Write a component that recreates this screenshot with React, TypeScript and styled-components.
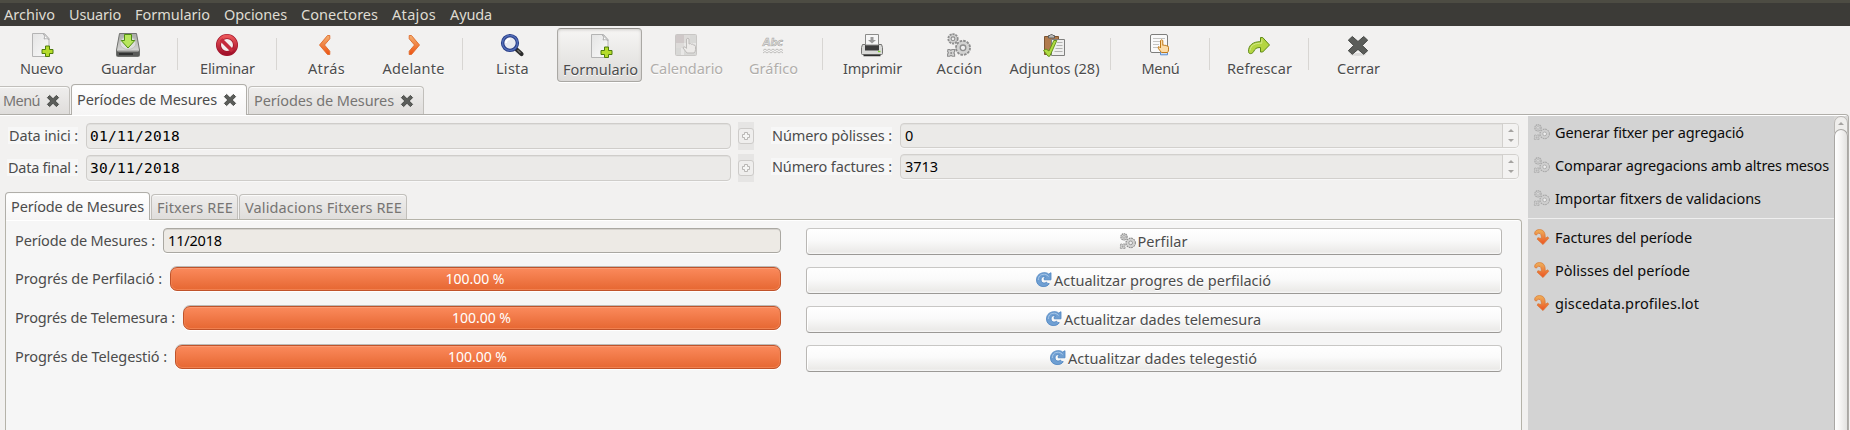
import React, { useLayoutEffect, useRef, useState } from "react";
import styled, { createGlobalStyle, css } from "styled-components";

const GlobalStyle = createGlobalStyle`
  * { box-sizing: border-box; }
  html, body { margin: 0; height: 100%; overflow: hidden; }
  body {
    background: #f2f1f0;
    color: #4c4c4c;
    font-family: "Noto Sans", "Open Sans", sans-serif;
    font-size: 14.5px;
    line-height: 20px;
    white-space: nowrap;
  }
  svg { display: block; flex: none; overflow: visible; }
`;

/* ---------- text that is tracked to a given advance width ---------- */

const TextBox = styled.span<{ $w: number }>`
  display: block;
  flex: none;
  width: ${(p) => p.$w}px;
  height: 20px;
  line-height: 18px;
`;

function Text({ w, children }: { w: number; children: string }) {
  const ref = useRef<HTMLSpanElement>(null);
  const [spacing, setSpacing] = useState(0);
  useLayoutEffect(() => {
    if (ref.current) {
      const natural = ref.current.getBoundingClientRect().width;
      setSpacing((w + 1 - natural) / children.length);
    }
  }, []);
  return (
    <TextBox $w={w}>
      <span ref={ref} style={{ letterSpacing: spacing }}>
        {children}
      </span>
    </TextBox>
  );
}

/* ---------- icons ---------- */

const Plus = () => (
  <path d="M14.5 13.5h4v3.5h3.5v4h-3.5v3h-4v-3H11v-4h3.5z" fill="#b5dc2b" stroke="#4f7d0c" />
);

const NewIcon = () => (
  <svg width="24" height="24" viewBox="0 0 24 24">
    <defs>
      <linearGradient id="paper" x1="0" y1="0" x2="1" y2="1">
        <stop offset="0" stopColor="#e4e4e4" />
        <stop offset="1" stopColor="#fafafa" />
      </linearGradient>
    </defs>
    <path d="M3.500 .5H15.500l4.500 5V23.500H3.500z" fill="url(#paper)" stroke="#b4b4b4" />
    <path d="M14.500 1c1.500 1.500 1 4 .5 5 1.500-.5 3.500-.5 5 .5z" fill="#fff" stroke="#a0a0a0" strokeWidth=".8" />
    <g transform="translate(2 -.5)"><Plus /></g>
  </svg>
);

const SaveIcon = () => (
  <svg width="24" height="24" viewBox="0 0 24 24">
    <defs>
      <linearGradient id="disk" x1="0" y1="0" x2="0" y2="1">
        <stop offset="0" stopColor="#a9aaa6" />
        <stop offset="1" stopColor="#e4e4e2" />
      </linearGradient>
    </defs>
    <path d="M3.500 .5h17l3 16.500v5.500q0 1-1 1h-21q-1 0-1-1V17z" fill="url(#disk)" stroke="#71726f" />
    <ellipse cx="12" cy="10" rx="8" ry="6.500" fill="#dededc" stroke="#c0c1be" />
    <path d="M.8 17.800h22.400v5.200H.8z" fill="#5a5b59" />
    <path d="M1.500 18.200h21" stroke="#a5a6a2" />
    <path d="M3 21h14" stroke="#252525" strokeWidth="1.500" />
    <path d="M8.500 1.500h7v6h3.300L12 15 5.200 7.500h3.300z" fill="#b8e65c" stroke="#4f8f10" />
  </svg>
);

const DeleteIcon = () => (
  <svg width="24" height="24" viewBox="0 0 24 24">
    <defs>
      <linearGradient id="ban" x1="0" y1="0" x2="0" y2="1">
        <stop offset="0" stopColor="#ea5558" />
        <stop offset="1" stopColor="#a3112b" />
      </linearGradient>
    </defs>
    <circle cx="12" cy="12" r="8.500" fill="#f3eeee" stroke="#a11228" strokeWidth="5" />
    <circle cx="12" cy="12" r="8.600" fill="none" stroke="url(#ban)" strokeWidth="3.600" />
    <path d="M6 6.500 17.500 18" stroke="#c42a3c" strokeWidth="3.800" />
  </svg>
);

const ArrowGradient = () => (
  <defs>
    <linearGradient id="chev" x1="0" y1="0" x2="0" y2="1">
      <stop offset="0" stopColor="#f4b070" />
      <stop offset="1" stopColor="#ee5312" />
    </linearGradient>
  </defs>
);

const BackIcon = () => (
  <svg width="24" height="24" viewBox="0 0 24 24">
    <ArrowGradient />
    <path d="M13.500 2.500h2.300v3.300L10.500 12l5.300 6.200v3.300h-2.300L5.500 12z" fill="url(#chev)" stroke="#df6a2a" strokeWidth=".9" strokeLinejoin="round" />
  </svg>
);

const ForwardIcon = () => (
  <svg width="24" height="24" viewBox="0 0 24 24">
    <ArrowGradient />
    <path d="M10.500 2.500H8.200v3.300l5.300 6.200-5.300 6.200v3.300h2.300L18.500 12z" fill="url(#chev)" stroke="#df6a2a" strokeWidth=".9" strokeLinejoin="round" />
  </svg>
);

const SearchIcon = () => (
  <svg width="24" height="24" viewBox="0 0 24 24">
    <path d="m15.500 15.500 6 5.500" stroke="#2b2b2b" strokeWidth="4.200" strokeLinecap="round" />
    <path d="m17.500 17 3 3" stroke="#77776f" strokeWidth="1.200" />
    <circle cx="10" cy="10" r="7.400" fill="#e9eaf0" stroke="#253a86" strokeWidth="3.400" />
    <circle cx="10" cy="10" r="7.500" fill="none" stroke="#526db6" strokeWidth="1.500" />
    <path d="M6 10a4 4 0 0 1 4-4" stroke="#fff" strokeWidth="2" fill="none" />
  </svg>
);

const CalendarIcon = () => (
  <svg width="24" height="24" viewBox="0 0 24 24">
    <rect x="1.500" y="1.500" width="21" height="21" rx="1" fill="#e8e7e6" stroke="#c9c7c5" />
    <path d="M2 2h8v8H2z" fill="#cfc8c8" />
    <path d="M10 2h6v8h-6zM2 10h8v5H2z" fill="#dddbd9" />
    <path d="M16 2h6v8h-6zM10 15h12v7H10zM2 15h5v7H2z" fill="#d8d8d6" />
    <path d="M12.500 6q1.500-1.500 2.500 0v5q1.500-1 2.500.3 1.500-.5 2.200.7 1.800 0 1.800 1.500v3q0 2-1.500 3.500h-7L9 15q.5-2 2.300-.8l1.200 1.200z" fill="#eceae8" stroke="#bdbbb9" />
  </svg>
);

const AbcText = styled.text`
  font: bold italic 11px "DejaVu Sans", sans-serif;
`;

const ChartIcon = () => (
  <svg width="24" height="24" viewBox="0 0 24 24">
    <AbcText x="2" y="13" textLength="20" lengthAdjust="spacingAndGlyphs" fill="#c6c5c3" stroke="#adacaa" strokeWidth=".7">Abc</AbcText>
    <path d="m2 17.500 2-1.500 2 1.500 2-1.500 2 1.500 2-1.500 2 1.500 2-1.500 2 1.500 2-1.500 2 1.500M2 20l2-1.500L6 20l2-1.500 2 1.500 2-1.500 2 1.500 2-1.500 2 1.500 2-1.500 2 1.500" stroke="#bfbebc" fill="none" />
  </svg>
);

const PrintIcon = () => (
  <svg width="24" height="24" viewBox="0 0 24 24">
    <path d="M2.500 11.500h19l1 3v6q0 1-1 1h-19q-1 0-1-1v-6z" fill="#d9d9d7" stroke="#747472" />
    <path d="M5 12h14v5.500H5z" fill="#3c3c3c" />
    <path d="M5.500 1.500h13v10.500h-13z" fill="#f6f6f6" stroke="#8c8c8a" />
    <path d="M10.500 4h3v3H16l-4 3.500L8 7h2.500z" fill="#9a9a9a" />
    <path d="M3.500 22.500h17" stroke="#2e2e2e" strokeWidth="1.500" />
    <path d="M18 18.500h2.500" stroke="#7fd030" strokeWidth="1.300" />
  </svg>
);

function GearsIcon({ size, faint }: { size: number; faint?: boolean }) {
  const dark = faint ? "#a9a9a9" : "#8e8e8e";
  const fill = faint ? "#cfcfcf" : "#d3d3d2";
  return (
    <svg width={size} height={size} viewBox="0 0 24 24">
      <circle cx="6" cy="5.800" r="4.700" fill={fill} stroke={dark} strokeWidth="1.800" strokeDasharray="2.200 .8" />
      <circle cx="6" cy="5.800" r="1.900" fill="#eee" stroke={dark} strokeWidth="1.100" />
      <circle cx="16" cy="14.800" r="7" fill={fill} stroke={dark} strokeWidth="1.900" strokeDasharray="2.600 1.060" />
      <circle cx="16" cy="14.800" r="5.800" fill={fill} />
      <circle cx="16" cy="14.800" r="2.800" fill="#eee" stroke={dark} strokeWidth="1.300" />
      <path d="M1 16.500h1.500l1.300.8 1.300-.8h2.500v2l-.8 1.400.8 1.300v2H5.500l-1.500-.8-1.300.8H.6v-2l.8-1.500-.8-1.300z" fill={fill} stroke={dark} strokeWidth="1.100" />
      <circle cx="4.200" cy="19.900" r="1" fill={dark} />
    </svg>
  );
}

const AttachIcon = () => (
  <svg width="24" height="24" viewBox="0 0 24 24">
    <path d="M2.500 3.500h14v18h-14z" fill="#b07a4c" stroke="#7c5431" />
    <path d="M6.500 5V2.500H8q1.500-3 3 0h1.500V5z" fill="#b9b9b7" stroke="#5e5e5c" />
    <path d="M9.500 6.500h13v16h-13z" fill="#efefee" stroke="#80807e" />
    <path d="M15 9.500h5.500m-6 3h6m-7 3h7m-8 3h8" stroke="#b3b3b1" />
    <path d="m1.500 17.500 2.500-1.500 3 2 4.800-10.500h3L7.800 23.200H6z" fill="#b0dc42" stroke="#5b8c14" strokeWidth=".9" />
  </svg>
);

const MenuIcon = () => (
  <svg width="24" height="24" viewBox="0 0 24 24">
    <rect x="2.500" y="1.500" width="17" height="18" rx="1.500" fill="#fafafa" stroke="#7e7e7c" />
    <path d="M5 5.500h12M5 8.500h7M5 11.500h6M5 14.500h5" stroke="#c4c4c2" />
    <path d="M12.500 18.500h7v3.300h-7z" fill="#cfe0f5" stroke="#5b8ed0" />
    <path d="M12.500 7.500q1.200-1.500 2.300 0v4.800q1.300-.8 2 .2 1.300-.6 2 .4 1.700-.2 1.700 1.400v2.600q0 1.500-1 2.600h-6l-3-3.800q-1-2 .5-2.200l1.500 1.500z" fill="#fcdca8" stroke="#c17a18" />
  </svg>
);

const RedoIcon = () => (
  <svg width="24" height="24" viewBox="0 0 24 24">
    <path d="M1.500 18.500C1.500 12 6 8.700 13.500 8.700V4.500h2.200L22.500 12l-6.800 7h-2.200v-4.500c-4 0-5.500 1-7 4.300-1.500 2.500-5 2.500-5-.3z" fill="#b4d542" stroke="#5f8a17" strokeLinejoin="round" />
    <path d="M3 17.500C4 11.800 8 10.200 14.800 10.200V6.500" stroke="#d3e98a" fill="none" />
  </svg>
);

function CrossIcon({ size }: { size: number }) {
  return (
    <svg width={size} height={size} viewBox="1.300 1.300 21.400 21.400">
      <path d="M6 2 12 8l6-6 4 4-6 6 6 6-4 4-6-6-6 6-4-4 6-6-6-6z" fill="#5b5d5a" stroke="#40423f" strokeWidth="1.600" strokeLinejoin="round" />
    </svg>
  );
}

const CloseIcon = () => (
  <svg width="24" height="24" viewBox="0 0 24 24">
    <ellipse cx="12" cy="21.500" rx="8" ry="1.500" fill="#dcdbda" />
    <path d="m6.300 3.500 5.700 5 5.700-5 4 3.700-5.400 5.300 5.400 5.200-4 3.600-5.700-4.900-5.700 4.900-4-3.600 5.400-5.200-5.400-5.300z" fill="#5b5d5a" stroke="#464845" strokeLinejoin="round" />
  </svg>
);

const ReloadIcon = () => (
  <svg width="16" height="16" viewBox="0 0 16 16">
    <path d="M9.500.7c1.300.1 2.300.6 3.200 1.400L15 .7v7.100H8.200V5.900l1.500-.6c-2.400-1.400-4.600-.2-4.600 2.500 0 2.900 3 4.200 5.300 2.300l1.300 1.300 1.600.3C10.800 16.200.5 15.800.5 8 .5 2.800 4.700.3 9.500.7z" fill="#6f9fd2" stroke="#4b83c0" strokeWidth=".8" />
    <path d="M2.300 8c0-4.500 3.500-6.500 7.700-5.500l2.700 2" stroke="#a8c7e8" fill="none" />
  </svg>
);

const JumpIcon = () => (
  <svg width="16" height="16" viewBox="0 0 16 16">
    <defs>
      <linearGradient id="jump" x1="0" y1="0" x2="0" y2="1">
        <stop offset="0" stopColor="#eeb25c" />
        <stop offset="1" stopColor="#ec5220" />
      </linearGradient>
    </defs>
    <path d="M.6 4.200C1 1.700 3 .6 5.300.6c4 0 5.900 2.500 5.900 7.200v1.400l2.600-1.400.9 1.500L9 15.600 3.200 10.200l.7-1.500 3.400.9C7.600 6 6.600 4.300 4.800 4.300c-1.200 0-1.500.6-2 1.500C2 6.500.5 5.700.6 4.200z" fill="url(#jump)" stroke="#d87430" strokeWidth=".7" />
  </svg>
);

/* ---------- menu bar ---------- */

const MenuBar = styled.nav`
  display: flex;
  flex: none;
  gap: 15px;
  height: 26px;
  padding: 2px 0 0 4px;
  background: #3c3b37;
  border-top: 3px solid #4d4c43;
  color: #dfdbd2;
`;

/* ---------- toolbar ---------- */

const ToolBar = styled.div`
  display: flex;
  flex: none;
  height: 58px;
  margin-left: -2px;
  padding-top: 2px;
`;

const Tool = styled.div<{ $wide?: boolean; $active?: boolean; $disabled?: boolean }>`
  display: flex;
  flex: none;
  flex-direction: column;
  align-items: center;
  gap: 2px;
  width: ${(p) => (p.$wide ? 102 : 87)}px;
  height: 54px;
  padding: 5px ${(p) => (p.$wide ? 0 : 1)}px 0 0;
  text-shadow: 0 1px #fff;
  color: ${(p) => (p.$disabled ? "#b1aeab" : "#4c4c4c")};
  ${(p) =>
    p.$active &&
    css`
      width: 85px;
      margin: 0 1px;
      padding: 5px 0 0 1px;
      border: 1px solid #aaa8a4;
      border-top-color: #918f8b;
      border-radius: 4px;
      background: linear-gradient(#f6f5f4, #dddbd9);
      box-shadow: inset 0 1px 3px #cfcdca, 0 1px #fff;
    `}
`;

const ToolSeparator = styled.i`
  flex: none;
  width: 1px;
  height: 32px;
  margin: 10px 6px 0 5px;
  background: #d8d6d3;
`;

/* ---------- notebooks ---------- */

const TabStrip = styled.div<{ $inset?: boolean }>`
  display: flex;
  flex: none;
  align-items: flex-end;
  gap: 1px;
  position: relative;
  z-index: 1;
  height: ${(p) => (p.$inset ? 28 : 31)}px;
  padding-left: ${(p) => (p.$inset ? 5 : 0)}px;
  margin-bottom: -1px;
`;

const Tab = styled.div<{ $w: number; $h: number; $active?: boolean; $pad: number; $top?: number; $first?: boolean }>`
  display: flex;
  flex: none;
  align-items: center;
  gap: 8px;
  width: ${(p) => p.$w}px;
  height: ${(p) => p.$h}px;
  padding: ${(p) => p.$top ?? 0}px 0 0 ${(p) => p.$pad}px;
  margin-bottom: ${(p) => (p.$active ? 0 : 1)}px;
  border: 1px solid ${(p) => (p.$active ? "#b0aea9" : "#c1bfbb")};
  border-bottom: 0;
  border-left-width: ${(p) => (p.$first ? 0 : 1)}px;
  border-radius: ${(p) => (p.$first ? "0 4px 0 0" : "4px 4px 0 0")};
  color: ${(p) => (p.$active ? "#4c4c4c" : "#777573")};
  background: ${(p) => (p.$active ? "linear-gradient(#fff, #f6f5f5)" : "linear-gradient(#efeeed, #dfdddb)")};
  box-shadow: inset 0 1px #fbfbfa;
`;

const Page = styled.div`
  display: flex;
  flex: 1;
  min-height: 0;
  width: 1849px;
  border: 1px solid #b0aea9;
  border-width: 1px 1px 0 0;
  border-top-right-radius: 4px;
  box-shadow: inset 0 1px #fff;
  padding-top: 1px;
`;

const Main = styled.main`
  display: flex;
  flex-direction: column;
  flex: none;
  width: 1528px;
  padding-top: 6px;
`;

/* ---------- record header ---------- */

const HeaderForm = styled.section`
  display: flex;
  flex: none;
  height: 70px;
`;

const DateColumn = styled.div`
  display: flex;
  flex-direction: column;
  gap: 4px;
  width: 771px;
`;

const CountColumn = styled.div`
  display: flex;
  flex-direction: column;
  gap: 6px;
  padding-top: 1px;
`;

const FieldRow = styled.div<{ $h: number }>`
  display: flex;
  align-items: center;
  height: ${(p) => p.$h}px;
`;

const CaptionCell = styled.div<{ $w: number; $raise?: boolean }>`
  display: flex;
  justify-content: flex-end;
  flex: none;
  width: ${(p) => p.$w}px;
  padding: 0 8px ${(p) => (p.$raise ? 1 : 0)}px 0;
`;

const Caption = styled.div`
  display: flex;
  align-items: center;
  height: 17px;
  padding: 1px 1px 0;
  background: #f7f7f7;
`;

const DateEntry = styled.div`
  display: flex;
  align-items: center;
  width: 645px;
  height: 26px;
  margin-right: 7px;
  padding-left: 3px;
  border: 1px solid #cfcdca;
  border-radius: 4px;
  background: #ebeae8;
  box-shadow: inset 0 1px #e0dfdd, 0 1px #f8f8f8;
  color: #000;
  font-family: "DejaVu Sans Mono", monospace;
  font-size: 14.5px;
  letter-spacing: 0.27px;
`;

const PickerCell = styled.div`
  display: flex;
  align-items: center;
  width: 16px;
  height: 28px;
  background: #e6e5e4;
`;

const PickerButton = styled.div`
  display: flex;
  align-items: center;
  justify-content: center;
  width: 16px;
  height: 16px;
  border: 1px solid #cdcbc9;
  border-radius: 3px;
  background: #efeeed;
`;

const PlusOutline = () => (
  <svg width="8" height="8" viewBox="0 0 8 8">
    <path d="M2.500.5h3v2h2v3h-2v2h-3v-2h-2v-3h2z" fill="#f6f6f5" stroke="#b9b7b5" />
  </svg>
);

const SpinEntry = styled.div`
  display: flex;
  align-items: center;
  justify-content: space-between;
  width: 619px;
  height: 25px;
  padding: 1px 0 0 4px;
  border: 1px solid #d2d0cd;
  border-radius: 4px;
  background: #ebeae8;
  box-shadow: inset 0 1px #e2e1df, 0 1px #f8f8f8;
  color: #000;
`;

const Spinner = styled.div`
  display: flex;
  flex-direction: column;
  align-items: center;
  justify-content: center;
  gap: 7px;
  width: 16px;
  height: 23px;
  margin-top: -1px;
  border-left: 1px solid #d2d0cd;
  border-radius: 0 3px 3px 0;
  background: #f3f2f1;
`;

const Triangle = styled.i<{ $down?: boolean }>`
  border: 3px solid transparent;
  border-width: ${(p) => (p.$down ? "3px 3px 0" : "0 3px 3px")};
  border-top-color: ${(p) => (p.$down ? "#a5a3a1" : "transparent")};
  border-bottom-color: ${(p) => (p.$down ? "transparent" : "#a5a3a1")};
`;

/* ---------- period panel ---------- */

const Panel = styled.section`
  display: flex;
  gap: 25px;
  flex: 1;
  width: 1517px;
  margin-left: 5px;
  padding: 8px 0 0 9px;
  border: 1px solid #b5b3a9;
  border-bottom: 0;
  border-radius: 0 4px 0 0;
  background: #f6f6f6;
  box-shadow: inset 0 1px #fff;
`;

const ProgressColumn = styled.div`
  display: flex;
  flex-direction: column;
  width: 766px;
`;

const ProgressRow = styled.div`
  display: flex;
  align-items: flex-start;
  gap: 9px;
  height: 39px;
`;

const RowCaption = styled.div<{ $top: number }>`
  padding-top: ${(p) => p.$top}px;
`;

const PeriodEntry = styled.div`
  display: flex;
  align-items: center;
  flex: 1;
  height: 25px;
  padding: 1px 0 0 4px;
  border: 1px solid #aaa8a2;
  border-radius: 4px;
  background: #edeae5;
  box-shadow: inset 0 1px #d5d2cd, 0 1px #fff;
  color: #000;
`;

const ProgressBar = styled.div`
  display: flex;
  align-items: center;
  justify-content: center;
  flex: 1;
  height: 24px;
  padding: 1px 2px 0 0;
  border: 1px solid #c0532a;
  border-radius: 7px;
  background: linear-gradient(#fb8a5c, #e66732);
  box-shadow: 0 -1px #bdbbb7, inset 0 1px #fb9a72, inset 0 0 0 1px #f0804f, 0 1px #fff;
  color: #fff;
  font-size: 14px;
`;

const ButtonColumn = styled.div`
  display: flex;
  flex-direction: column;
  gap: 12px;
`;

const ActionButton = styled.div`
  display: flex;
  align-items: center;
  justify-content: center;
  gap: 2px;
  width: 696px;
  height: 27px;
  padding-right: 2px;
  border: 1px solid #b9b7b4;
  border-top-color: #c8c7c5;
  border-bottom-color: #9b9996;
  border-radius: 4px;
  background: linear-gradient(#fff, #fafafa 45%, #ebeae8 92%, #f8f8f8);
  box-shadow: inset 1px 0 #fff, inset -1px 0 #fff;
  text-shadow: 0 1px #fff;
`;

const ButtonIcon = styled.span`
  margin-bottom: 1px;
`;

const ButtonLabel = styled.span`
  padding-top: 1px;
`;

/* ---------- actions sidebar ---------- */

const Sidebar = styled.aside`
  flex: none;
  width: 306px;
  background: #d3d3d3;
  color: #0c0c0c;
`;

const WizardGroup = styled.div`
  padding: 1px 0 2px;
  margin-bottom: 3px;
  border-bottom: 1px solid #efefef;
`;

const LinkGroup = styled.div``;

const SideItem = styled.div`
  display: flex;
  align-items: center;
  gap: 5px;
  height: 33px;
  padding: 0 0 3px 6px;
`;

const SideLabel = styled.span`
  padding-top: 2px;
`;

const ScrollBar = styled.div`
  display: flex;
  flex-direction: column;
  flex: none;
  width: 14px;
  background: #d8d7d5;
`;

const ScrollUp = styled.div`
  display: flex;
  align-items: center;
  justify-content: center;
  height: 17px;
  padding-bottom: 3px;
  border: 1px solid #bab8b5;
  border-radius: 7px 7px 0 0;
  background: #efeeec;
`;

const ScrollThumb = styled.div`
  flex: 1;
  margin-top: -4px;
  border: 1px solid #a9a7a4;
  border-bottom: 0;
  border-radius: 7px 7px 0 0;
  background: linear-gradient(90deg, #fff, #f4f3f2 50%, #e3e2e0);
`;

/* ---------- data ---------- */

const menus: [string, number][] = [
  ["Archivo", 50], ["Usuario", 51], ["Formulario", 74], ["Opciones", 62],
  ["Conectores", 76], ["Atajos", 43], ["Ayuda", 41],
];

type ToolSpec = { label: string; w: number; icon: React.ReactNode; active?: boolean; disabled?: boolean; wide?: boolean };

const tools: (ToolSpec | null)[] = [
  { label: "Nuevo", w: 42, icon: <NewIcon /> },
  { label: "Guardar", w: 54, icon: <SaveIcon /> },
  null,
  { label: "Eliminar", w: 54, icon: <DeleteIcon /> },
  null,
  { label: "Atrás", w: 36, icon: <BackIcon /> },
  { label: "Adelante", w: 61, icon: <ForwardIcon /> },
  null,
  { label: "Lista", w: 32, icon: <SearchIcon /> },
  { label: "Formulario", w: 74, icon: <NewIcon />, active: true },
  { label: "Calendario", w: 72, icon: <CalendarIcon />, disabled: true },
  { label: "Gráfico", w: 48, icon: <ChartIcon />, disabled: true },
  null,
  { label: "Imprimir", w: 58, icon: <PrintIcon /> },
  { label: "Acción", w: 45, icon: <GearsIcon size={24} /> },
  { label: "Adjuntos (28)", w: 89, icon: <AttachIcon />, wide: true },
  null,
  { label: "Menú", w: 37, icon: <MenuIcon /> },
  null,
  { label: "Refrescar", w: 64, icon: <RedoIcon /> },
  null,
  { label: "Cerrar", w: 42, icon: <CloseIcon /> },
];

const progress: [string, number][] = [
  ["Progrés de Perfilació :", 146],
  ["Progrés de Telemesura :", 159],
  ["Progrés de Telegestió :", 151],
];

const buttons: [string, number][] = [
  ["Perfilar", 49],
  ["Actualitzar progres de perfilació", 216],
  ["Actualitzar dades telemesura", 196],
  ["Actualitzar dades telegestió", 188],
];

const wizards: [string, number][] = [
  ["Generar fitxer per agregació", 188],
  ["Comparar agregacions amb altres mesos", 273],
  ["Importar fitxers de validacions", 205],
];

const links: [string, number][] = [
  ["Factures del període", 136],
  ["Pòlisses del període", 134],
  ["giscedata.profiles.lot", 143],
];

function DateField({ label, w, value }: { label: string; w: number; value: string }) {
  return (
    <FieldRow $h={28}>
      <CaptionCell $w={86} $raise>
        <Caption><Text w={w}>{label}</Text></Caption>
      </CaptionCell>
      <DateEntry>{value}</DateEntry>
      <PickerCell>
        <PickerButton><PlusOutline /></PickerButton>
      </PickerCell>
    </FieldRow>
  );
}

function CountField({ label, w, value, valueWidth }: { label: string; w: number; value: string; valueWidth: number }) {
  return (
    <FieldRow $h={25}>
      <CaptionCell $w={129}>
        <Caption><Text w={w}>{label}</Text></Caption>
      </CaptionCell>
      <SpinEntry>
        <Text w={valueWidth}>{value}</Text>
        <Spinner><Triangle /><Triangle $down /></Spinner>
      </SpinEntry>
    </FieldRow>
  );
}

const Window = styled.div`
  display: flex;
  flex-direction: column;
  width: 1850px;
  height: 430px;
  overflow: hidden;
`;

export default function App() {
  return (
    <Window>
      <GlobalStyle />
      <MenuBar>
        {menus.map(([label, w]) => <Text key={label} w={w}>{label}</Text>)}
      </MenuBar>

      <ToolBar>
        {tools.map((tool, i) =>
          tool ? (
            <Tool key={i} $wide={tool.wide} $active={tool.active} $disabled={tool.disabled}>
              {tool.icon}
              <Text w={tool.w}>{tool.label}</Text>
            </Tool>
          ) : (
            <ToolSeparator key={i} />
          )
        )}
      </ToolBar>

      <TabStrip>
        <Tab $w={70} $h={28} $pad={3} $top={1} $first><Text w={36}>Menú</Text><CrossIcon size={12} /></Tab>
        <Tab $w={176} $h={31} $pad={5} $active><Text w={139}>Períodes de Mesures</Text><CrossIcon size={12} /></Tab>
        <Tab $w={176} $h={28} $pad={5} $top={1}><Text w={139}>Períodes de Mesures</Text><CrossIcon size={12} /></Tab>
      </TabStrip>

      <Page>
        <Main>
          <HeaderForm>
            <DateColumn>
              <DateField label="Data inici :" w={68} value="01/11/2018" />
              <DateField label="Data final :" w={69} value="30/11/2018" />
            </DateColumn>
            <CountColumn>
              <CountField label="Número pòlisses :" w={119} value="0" valueWidth={8} />
              <CountField label="Número factures :" w={119} value="3713" valueWidth={32} />
            </CountColumn>
          </HeaderForm>

          <TabStrip $inset>
            <Tab $w={145} $h={28} $pad={5} $top={1} $active><Text w={132}>Període de Mesures</Text></Tab>
            <Tab $w={87} $h={25} $pad={5} $top={2}><Text w={75}>Fitxers REE</Text></Tab>
            <Tab $w={168} $h={25} $pad={5} $top={2}><Text w={156}>Validacions Fitxers REE</Text></Tab>
          </TabStrip>
          <Panel>
            <ProgressColumn>
              <ProgressRow>
                <RowCaption $top={3}><Text w={139}>Període de Mesures :</Text></RowCaption>
                <PeriodEntry><Text w={53}>11/2018</Text></PeriodEntry>
              </ProgressRow>
              {progress.map(([label, w]) => (
                <ProgressRow key={label}>
                  <RowCaption $top={2}><Text w={w}>{label}</Text></RowCaption>
                  <ProgressBar><Text w={58}>100.00 %</Text></ProgressBar>
                </ProgressRow>
              ))}
            </ProgressColumn>
            <ButtonColumn>
              {buttons.map(([label, w], i) => (
                <ActionButton key={label}>
                  <ButtonIcon>{i === 0 ? <GearsIcon size={16} /> : <ReloadIcon />}</ButtonIcon>
                  <ButtonLabel><Text w={w}>{label}</Text></ButtonLabel>
                </ActionButton>
              ))}
            </ButtonColumn>
          </Panel>
        </Main>

        <Sidebar>
          <WizardGroup>
            {wizards.map(([label, w]) => (
              <SideItem key={label}>
                <GearsIcon size={16} faint />
                <SideLabel><Text w={w}>{label}</Text></SideLabel>
              </SideItem>
            ))}
          </WizardGroup>
          <LinkGroup>
            {links.map(([label, w]) => (
              <SideItem key={label}>
                <JumpIcon />
                <SideLabel><Text w={w}>{label}</Text></SideLabel>
              </SideItem>
            ))}
          </LinkGroup>
        </Sidebar>
        <ScrollBar>
          <ScrollUp><Triangle /></ScrollUp>
          <ScrollThumb />
        </ScrollBar>
      </Page>
    </Window>
  );
}
